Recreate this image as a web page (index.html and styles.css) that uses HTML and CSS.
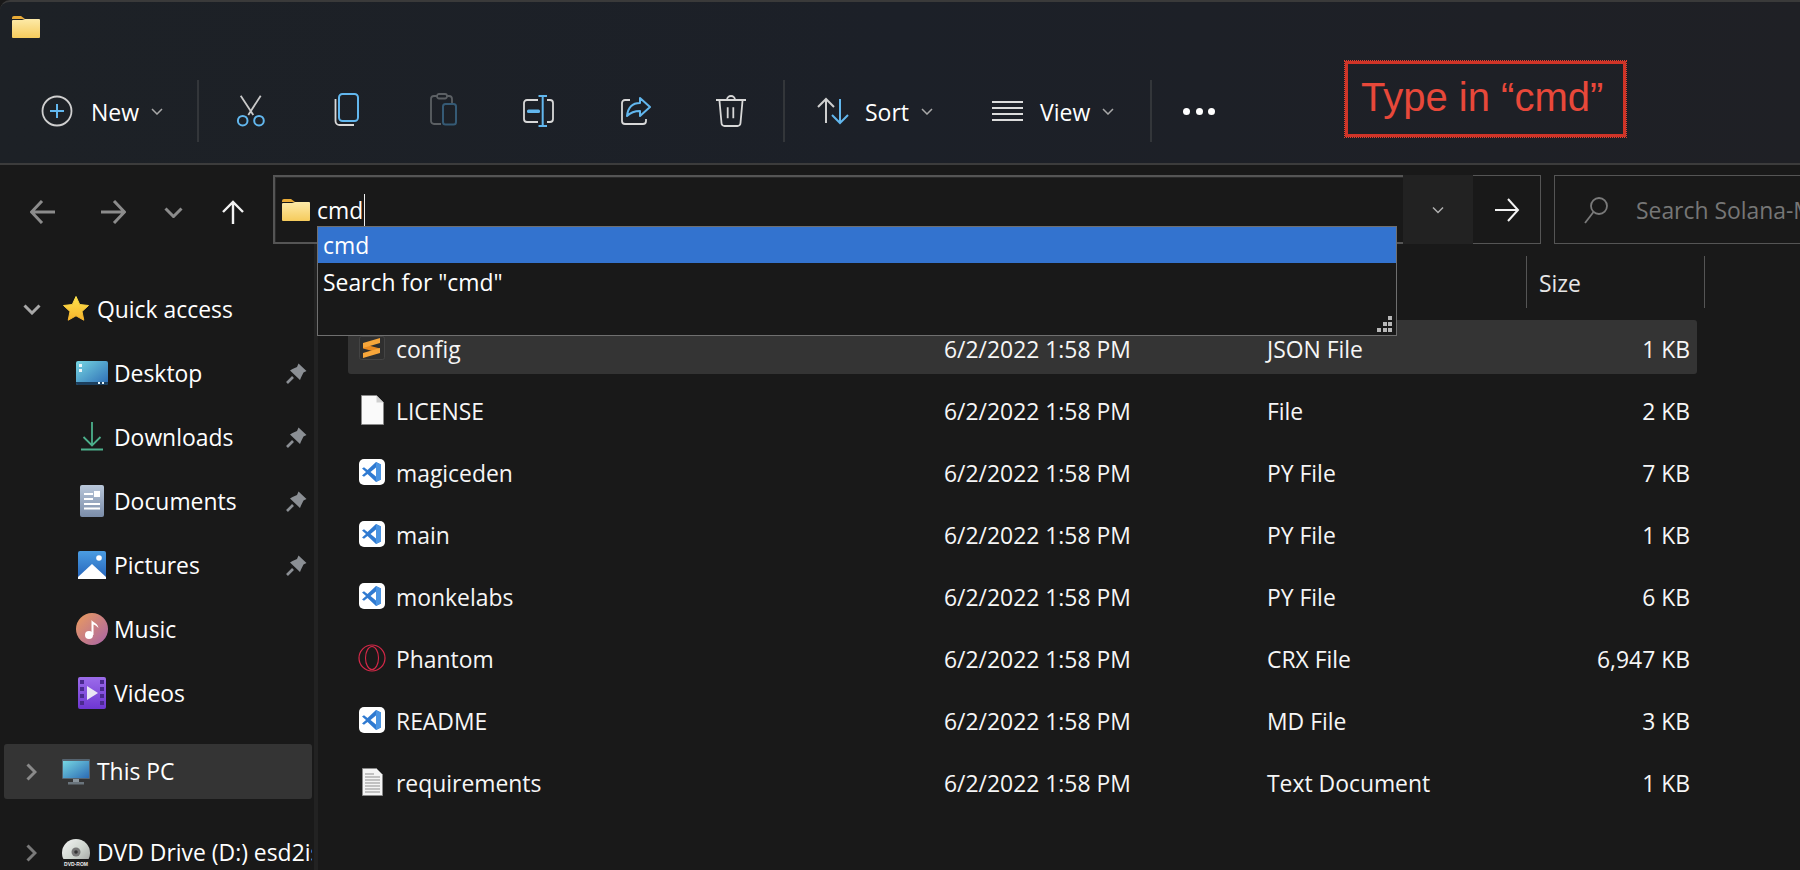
FILE: index.html
```html
<!DOCTYPE html>
<html lang="en">
<head>
    <meta charset="UTF-8">
    <title>Explorer</title>
    <link rel="stylesheet" href="styles.css">
</head>
<body>
    <svg class="defs">
        <defs>
            <linearGradient id="folderBody" x1="0" y1="0" x2="0" y2="1">
                <stop offset="0" stop-color="#fdeaa8"/>
                <stop offset="1" stop-color="#f5cb5c"/>
            </linearGradient>
            <linearGradient id="star" x1="0" y1="0" x2="0" y2="1">
                <stop offset="0" stop-color="#fde24c"/>
                <stop offset="1" stop-color="#f6b42c"/>
            </linearGradient>
            <linearGradient id="desk" x1="0" y1="0" x2="1" y2="1">
                <stop offset="0" stop-color="#76d6e2"/>
                <stop offset="1" stop-color="#2c6bb4"/>
            </linearGradient>
            <linearGradient id="docs" x1="0" y1="0" x2="0" y2="1">
                <stop offset="0" stop-color="#b9c7da"/>
                <stop offset="1" stop-color="#7a8ca8"/>
            </linearGradient>
            <linearGradient id="pics" x1="0" y1="0" x2="0" y2="1">
                <stop offset="0" stop-color="#4b9de2"/>
                <stop offset="1" stop-color="#2463ba"/>
            </linearGradient>
            <linearGradient id="music" x1="0" y1="0" x2="1" y2="1">
                <stop offset="0" stop-color="#ec9d5c"/>
                <stop offset="1" stop-color="#a863a8"/>
            </linearGradient>
            <linearGradient id="video" x1="0" y1="0" x2="0" y2="1">
                <stop offset="0" stop-color="#9c6cea"/>
                <stop offset="1" stop-color="#6e36d2"/>
            </linearGradient>
            <linearGradient id="disc" x1="0" y1="0" x2="1" y2="1">
                <stop offset="0" stop-color="#f4f4f4"/>
                <stop offset="0.5" stop-color="#cfd6cf"/>
                <stop offset="1" stop-color="#9a9a9a"/>
            </linearGradient>

            <symbol id="folder" viewBox="0 0 28 22">
                <path d="M0 2a2 2 0 0 1 2-2h7l4 3H0z" fill="#e9ab37"/>
                <path d="M0 5a1 1 0 0 1 1-1l9 0 3-1h14a1 1 0 0 1 1 1v17a1 1 0 0 1-1 1H1a1 1 0 0 1-1-1z" fill="url(#folderBody)"/>
            </symbol>
            <symbol id="chev" viewBox="0 0 12 7">
                <path d="M1 1l5 5 5-5" fill="none" stroke="currentColor" stroke-width="1.5"/>
            </symbol>
            <symbol id="pin" viewBox="0 0 21 21">
                <path d="M12.5.5l8 7.5-3 1.5-2.5 5-1 2.5L4 7.5 6.5 6 11 4z" fill="#8b8f94"/>
                <path d="M7 14l-6 6" stroke="#8b8f94" stroke-width="2.6"/>
            </symbol>
            <symbol id="vscode" viewBox="0 0 26 26">
                <rect width="26" height="26" rx="5" fill="#fff"/>
                <path d="M17 3l5 2.4v15.2L17 23 8.5 15 5 17.7 3 16.5 7 13 3 9.5l2-1.2L8.500 11z" fill="#2f7ad1"/>
                <path d="M17 3l5 2.4v15.2L17 23z" fill="#4a94e2"/>
                <path d="M17 8.500L11.500 13 17 17.500z" fill="#fff"/>
            </symbol>
        </defs>
    </svg>

    <div class="window">
        <header class="ribbon">
            <div class="titlebar">
                <svg class="folder-icon"><use href="#folder"/></svg>
            </div>
            <div class="toolbar">
                <div class="tool tool-new">
                    <svg width="32" height="32" viewBox="0 0 32 32">
                        <circle cx="16" cy="16" r="14.500" fill="none" stroke="#cfcfcf" stroke-width="1.800"/>
                        <path d="M16 9v14M9 16h14" stroke="#62b7ee" stroke-width="2"/>
                    </svg>
                    <span class="tool-label">New</span>
                    <svg class="tool-chev"><use href="#chev"/></svg>
                </div>
                <div class="sep"></div>
                <div class="tool tool-icon">
                    <svg width="30" height="34" viewBox="0 0 30 34">
                        <path d="M4.700 1.700L17.300 21M24.700 1.700L12.300 21" stroke="#c9c9c9" stroke-width="1.800" fill="none"/>
                        <circle cx="6.700" cy="26.700" r="4.800" fill="none" stroke="#62b7ee" stroke-width="2"/>
                        <circle cx="23" cy="26.700" r="4.800" fill="none" stroke="#62b7ee" stroke-width="2"/>
                    </svg>
                </div>
                <div class="tool tool-icon">
                    <svg width="26" height="36" viewBox="0 0 26 36">
                        <path d="M1.500 6v22a4 4 0 0 0 4 4H20" fill="none" stroke="#d8d8d8" stroke-width="1.800"/>
                        <rect x="5" y="1" width="19" height="27" rx="3.500" fill="none" stroke="#62b7ee" stroke-width="2"/>
                    </svg>
                </div>
                <div class="tool tool-icon">
                    <svg width="29" height="36" viewBox="0 0 29 36">
                        <path d="M12 31H5a3 3 0 0 1-3-3V6a3 3 0 0 1 3-3h3M18 3h2a3 3 0 0 1 3 3v4" fill="none" stroke="#5c6064" stroke-width="1.800"/>
                        <rect x="8" y="1" width="10" height="4.500" rx="2" fill="none" stroke="#5c6064" stroke-width="1.800"/>
                        <rect x="14" y="11" width="13" height="20.500" rx="2.500" fill="none" stroke="#355a75" stroke-width="2"/>
                    </svg>
                </div>
                <div class="tool tool-icon">
                    <svg width="34" height="32" viewBox="0 0 34 32">
                        <path d="M16 5H5a3 3 0 0 0-3 3v16a3 3 0 0 0 3 3h11M25 5h3a3 3 0 0 1 3 3v16a3 3 0 0 1-3 3h-3" fill="none" stroke="#d8d8d8" stroke-width="1.800"/>
                        <path d="M20.700 1v30M16.500 1h8.500M16.500 31h8.500" fill="none" stroke="#62b7ee" stroke-width="2"/>
                        <rect x="5" y="14.500" width="13" height="3.500" rx="1.500" fill="#62b7ee"/>
                    </svg>
                </div>
                <div class="tool tool-icon">
                    <svg width="32" height="32" viewBox="-1 0 32 32">
                        <path d="M10 5H5a3 3 0 0 0-3 3v18a3 3 0 0 0 3 3h18a3 3 0 0 0 3-3v-2" fill="none" stroke="#d8d8d8" stroke-width="1.800"/>
                        <path d="M20 3l10 9-10 9v-5c-6 0-10 2-13 5 1-9 6-13 13-13z" fill="none" stroke="#62b7ee" stroke-width="2" stroke-linejoin="round"/>
                    </svg>
                </div>
                <div class="tool tool-icon">
                    <svg width="30" height="32" viewBox="0 0 30 32">
                        <path d="M0 5h30M11 5a4 4 0 0 1 8 0M3.500 6l2 22a3 3 0 0 0 3 3h13a3 3 0 0 0 3-3l2-22M11.700 12.300v11M17.300 12.300v11" fill="none" stroke="#d8d8d8" stroke-width="1.800"/>
                    </svg>
                </div>
                <div class="sep"></div>
                <div class="tool tool-sort">
                    <svg width="32" height="28" viewBox="0 0 32 28">
                        <path d="M9 2v24M1 10l8-8 8 8" fill="none" stroke="#cfcfcf" stroke-width="2"/>
                        <path d="M23 2v24M15 18l8 8 8-8" fill="none" stroke="#62b7ee" stroke-width="2"/>
                    </svg>
                    <span class="tool-label">Sort</span>
                    <svg class="tool-chev"><use href="#chev"/></svg>
                </div>
                <div class="tool tool-view">
                    <svg width="31" height="20" viewBox="0 0 31 20">
                        <path d="M0 1h31M0 7h31M0 13h31M0 19h31" stroke="#dcdcdc" stroke-width="2"/>
                    </svg>
                    <span class="tool-label">View</span>
                    <svg class="tool-chev"><use href="#chev"/></svg>
                </div>
                <div class="sep"></div>
                <div class="tool tool-more">
                    <span class="dot"></span><span class="dot"></span><span class="dot"></span>
                </div>
            </div>
        </header>

        <div class="address-row">
            <div class="nav-btn nav-wide">
                <svg width="26" height="24" viewBox="0 0 26 24"><path d="M25 12H2M12 1L1.500 12 12 23" fill="none" stroke="#8c8c8c" stroke-width="3"/></svg>
            </div>
            <div class="nav-btn nav-wide">
                <svg width="26" height="24" viewBox="0 0 26 24"><path d="M1 12h23M14 1l10.500 11L14 23" fill="none" stroke="#8c8c8c" stroke-width="3"/></svg>
            </div>
            <div class="nav-btn nav-narrow">
                <svg width="19" height="11" viewBox="0 0 19 11"><path d="M1.500 1.500l8 8 8-8" fill="none" stroke="#8c8c8c" stroke-width="3"/></svg>
            </div>
            <div class="nav-btn nav-wide">
                <svg width="22" height="24" viewBox="0 0 22 24"><path d="M11 24V2M1 12L11 2l10 10" fill="none" stroke="#f2f2f2" stroke-width="2.400"/></svg>
            </div>
            <div class="address-box">
                <svg class="folder-icon"><use href="#folder"/></svg>
                <span class="address-text">cmd</span><span class="caret"></span>
            </div>
            <div class="address-drop">
                <svg class="drop-chev"><use href="#chev"/></svg>
            </div>
            <div class="go-btn">
                <svg width="26" height="24" viewBox="0 0 26 24"><path d="M1 12h23M14 1l10 11-10 11" fill="none" stroke="#f2f2f2" stroke-width="2"/></svg>
            </div>
            <div class="search-box">
                <svg width="26" height="28" viewBox="0 0 26 28"><circle cx="16" cy="10" r="8" fill="none" stroke="#7a7a7a" stroke-width="1.800"/><path d="M10.500 16L2 27" stroke="#7a7a7a" stroke-width="1.800"/></svg>
                <span class="search-text">Search Solana-Main</span>
            </div>
        </div>

        <div class="content">
            <nav class="sidebar">
                <div class="nav-row nav-top">
                    <span class="expander"><svg width="18" height="11" viewBox="0 0 18 11"><path d="M1.500 1.500L9 9l7.500-7.500" fill="none" stroke="#a8a8a8" stroke-width="3"/></svg></span>
                    <svg class="nav-icon" width="28" height="28" viewBox="0 0 28 28"><path d="M14 1.500l3.700 8 8.800 1-6.500 6 1.800 8.700L14 20.800 6.200 25.200 8 16.500l-6.500-6 8.800-1z" fill="url(#star)" stroke="url(#star)" stroke-linejoin="round"/></svg>
                    <span class="nav-label">Quick access</span>
                </div>
                <div class="nav-row nav-sub">
                    <svg class="nav-icon" width="32" height="24" viewBox="0 0 32 24"><rect width="32" height="24" rx="2" fill="url(#desk)"/><path d="M0 21h32v1a2 2 0 0 1-2 2H2a2 2 0 0 1-2-2z" fill="#1c3f5e"/><path d="M3 3h3v3H3zM3 8h3v3H3zM22 21h2v2h-2zM26 21h2v2h-2z" fill="#e8f6fa"/></svg>
                    <span class="nav-label">Desktop</span>
                    <svg class="pin"><use href="#pin"/></svg>
                </div>
                <div class="nav-row nav-sub">
                    <svg class="nav-icon" width="32" height="30" viewBox="0 0 32 30"><path d="M16 0v23M7.500 15l8.500 8.500 8.500-8.500M5 27.500h22" fill="none" stroke="#4cb08c" stroke-width="1.800"/></svg>
                    <span class="nav-label">Downloads</span>
                    <svg class="pin"><use href="#pin"/></svg>
                </div>
                <div class="nav-row nav-sub">
                    <svg class="nav-icon" width="32" height="32" viewBox="0 0 32 32"><rect x="4" width="24" height="32" rx="2" fill="url(#docs)"/><path d="M8 8h9v2H8zM8 13h9v2H8zM8 18h16v2H8zM8 22.500h16v2H8z" fill="#fff"/><rect x="18" y="6" width="6" height="6" fill="#fff"/></svg>
                    <span class="nav-label">Documents</span>
                    <svg class="pin"><use href="#pin"/></svg>
                </div>
                <div class="nav-row nav-sub">
                    <svg class="nav-icon" width="32" height="28" viewBox="0 0 32 28"><rect x="2" width="28" height="28" rx="2" fill="url(#pics)"/><path d="M2 26L16 13l14 13v2H2z" fill="#fff"/><circle cx="23" cy="7" r="2.800" fill="#fff"/></svg>
                    <span class="nav-label">Pictures</span>
                    <svg class="pin"><use href="#pin"/></svg>
                </div>
                <div class="nav-row nav-sub">
                    <svg class="nav-icon" width="32" height="32" viewBox="0 0 32 32"><circle cx="16" cy="16" r="16" fill="url(#music)"/><circle cx="13" cy="22" r="4" fill="#fff"/><path d="M15.500 22V7c2 3 6 3 7 8-2-2-3-3-5-3.500V22z" fill="#fff"/></svg>
                    <span class="nav-label">Music</span>
                </div>
                <div class="nav-row nav-sub">
                    <svg class="nav-icon" width="32" height="32" viewBox="0 0 32 32"><rect x="2" width="28" height="32" rx="2" fill="url(#video)"/><path d="M4 3h4v4H4zM4 10h4v4H4zM4 17h4v4H4zM4 24h4v4H4zM24 3h4v4h-4zM24 10h4v4h-4zM24 17h4v4h-4zM24 24h4v4h-4z" fill="#4b2a90"/><path d="M11 9l11 7-11 7z" fill="#eae6f4"/></svg>
                    <span class="nav-label">Videos</span>
                </div>
                <div class="nav-row nav-top nav-selected">
                    <span class="expander"><svg width="11" height="18" viewBox="0 0 11 18"><path d="M1.500 1.500L9 9l-7.500 7.500" fill="none" stroke="#8a8a8a" stroke-width="3"/></svg></span>
                    <svg class="nav-icon" width="28" height="26" viewBox="0 0 28 26"><rect width="28" height="20" rx="1" fill="#566470"/><rect x="1" y="2" width="26" height="17" fill="url(#desk)"/><rect x="11" y="20" width="6" height="3" fill="#8a949c"/><rect x="6" y="23" width="16" height="2.500" fill="#6a747c"/></svg>
                    <span class="nav-label">This PC</span>
                </div>
                <div class="nav-row nav-top nav-drive">
                    <span class="expander"><svg width="11" height="18" viewBox="0 0 11 18"><path d="M1.500 1.500L9 9l-7.500 7.500" fill="none" stroke="#7a7a7a" stroke-width="3"/></svg></span>
                    <svg class="nav-icon" width="28" height="28" viewBox="0 0 28 28"><circle cx="14" cy="14" r="14" fill="url(#disc)"/><circle cx="14" cy="13" r="4.500" fill="#777"/><circle cx="14" cy="13" r="1.800" fill="#333"/><rect y="20" width="28" height="8" fill="#1c1c1c"/><text class="dvd-label" x="14" y="26.500" text-anchor="middle">DVD-ROM</text></svg>
                    <span class="nav-label">DVD Drive (D:) esd2iso</span>
                </div>
            </nav>

            <main class="files">
                <div class="file-header">
                    <span class="col-head col-size">Size</span>
                </div>

                <div class="file-row file-selected">
                    <span class="file-icon">
                        <svg width="26" height="24" viewBox="0 0 26 24"><rect x=".5" y=".5" width="25" height="23" rx="2" fill="#2f2f2f" stroke="#444"/><path d="M4 8l17 4.500V17L4 12.500z" fill="#e98a20"/><path d="M4 7l17-5v5L4 12zM4 17l17-5v5L4 22z" fill="#f7a63a"/></svg>
                    </span>
                    <span>config</span><span>6/2/2022 1:58 PM</span><span>JSON File</span><span class="file-size">1 KB</span>
                </div>
                <div class="file-row">
                    <span class="file-icon">
                        <svg width="23" height="30" viewBox="0 0 23 30"><path d="M.5.500h15l7 7v22H.5z" fill="#fafafa" stroke="#8a8a8a"/><path d="M15.500.500v7h7z" fill="#cfcfcf"/></svg>
                    </span>
                    <span>LICENSE</span><span>6/2/2022 1:58 PM</span><span>File</span><span class="file-size">2 KB</span>
                </div>
                <div class="file-row">
                    <span class="file-icon"><svg width="26" height="26"><use href="#vscode"/></svg></span>
                    <span>magiceden</span><span>6/2/2022 1:58 PM</span><span>PY File</span><span class="file-size">7 KB</span>
                </div>
                <div class="file-row">
                    <span class="file-icon"><svg width="26" height="26"><use href="#vscode"/></svg></span>
                    <span>main</span><span>6/2/2022 1:58 PM</span><span>PY File</span><span class="file-size">1 KB</span>
                </div>
                <div class="file-row">
                    <span class="file-icon"><svg width="26" height="26"><use href="#vscode"/></svg></span>
                    <span>monkelabs</span><span>6/2/2022 1:58 PM</span><span>PY File</span><span class="file-size">6 KB</span>
                </div>
                <div class="file-row">
                    <span class="file-icon">
                        <svg width="28" height="28" viewBox="0 0 28 28"><circle cx="14" cy="14" r="13" fill="none" stroke="#d62848" stroke-width="1.200"/><ellipse cx="14" cy="14" rx="6.500" ry="11.500" fill="none" stroke="#d62848" stroke-width="1.100"/></svg>
                    </span>
                    <span>Phantom</span><span>6/2/2022 1:58 PM</span><span>CRX File</span><span class="file-size">6,947 KB</span>
                </div>
                <div class="file-row">
                    <span class="file-icon"><svg width="26" height="26"><use href="#vscode"/></svg></span>
                    <span>README</span><span>6/2/2022 1:58 PM</span><span>MD File</span><span class="file-size">3 KB</span>
                </div>
                <div class="file-row">
                    <span class="file-icon">
                        <svg width="21" height="28" viewBox="0 0 21 28"><path d="M.5.500h14l6 6v21H.5z" fill="#f4f4f4" stroke="#8a8a8a"/><path d="M3 6h9M3 9h15M3 12h15M3 15h15M3 18h15M3 21h15M3 24h15" stroke="#8f8f8f"/></svg>
                    </span>
                    <span>requirements</span><span>6/2/2022 1:58 PM</span><span>Text Document</span><span class="file-size">1 KB</span>
                </div>
            </main>
        </div>
    </div>

    <!-- autocomplete list over the address bar -->
    <div class="suggest">
        <div class="suggest-item suggest-active">cmd</div>
        <div class="suggest-item">Search for "cmd"</div>
        <svg class="grip" width="16" height="16" viewBox="0 0 16 16"><path d="M11 0h4v4h-4zM6 6h4v4H6zM11 6h4v4h-4zM0 12h4v4H0zM6 12h4v4H6zM11 12h4v4h-4z" fill="#b8b8b8"/></svg>
    </div>

    <!-- red note drawn on top of the screenshot -->
    <div class="note">Type in “cmd”</div>
</body>
</html>
```

FILE: styles.css
```css
* {
    box-sizing: border-box;
}
html, body {
    margin: 0;
    height: 100%;
    overflow: hidden;
}
body {
    position: relative;
    font-family: "Open Sans", "Noto Sans", sans-serif;
    font-size: 22.900px;
    color: #fff;
    background-color: #191919;
}
svg {
    display: block;
    flex: none;
}
.defs {
    position: absolute;
    width: 0;
    height: 0;
}
.window {
    width: 1800px;
    height: 870px;
}

/* ribbon */
.ribbon {
    height: 165px;
    border-top: 2px solid #3a3a3a;
    border-bottom: 2px solid #3c3c3c;
    border-top-left-radius: 10px;
    background: linear-gradient(90deg, #1d2126 0%, #1c2028 50%, #1f2025 100%);
}
.titlebar {
    height: 78px;
    padding: 14px 12px 0;
}
.folder-icon {
    width: 28px;
    height: 22px;
}
.toolbar {
    display: flex;
    align-items: center;
    height: 62px;
    padding-left: 20px;
}
.sep {
    flex: none;
    width: 2px;
    height: 62px;
    margin: 0 4px;
    background-color: #33363a;
}
.tool {
    display: flex;
    align-items: center;
    flex: none;
}
.tool-label {
    padding-top: 3px;
    font-size: 23px;
    line-height: 1;
}
.tool-chev {
    width: 12px;
    height: 7px;
    color: #a8a8a8;
}
.tool-new {
    width: 173px;
    padding-left: 21px;
}
.tool-new .tool-label {
    margin-left: 18px;
}
.tool-new .tool-chev {
    margin-left: 12px;
}
.tool-icon {
    justify-content: center;
    width: 96px;
}
.tool-sort {
    width: 174px;
    padding-left: 28px;
}
.tool-sort .tool-label {
    margin-left: 16px;
}
.tool-sort .tool-chev {
    margin-left: 12px;
}
.tool-view {
    width: 183px;
    padding-left: 29px;
}
.tool-view .tool-label {
    margin-left: 17px;
}
.tool-view .tool-chev {
    margin-left: 12px;
}
.tool-more {
    gap: 5.500px;
    margin-left: 27px;
}
.dot {
    width: 7px;
    height: 7px;
    border-radius: 50%;
    background-color: #fff;
}

/* address row */
.address-row {
    display: flex;
    height: 69px;
    margin-top: 10px;
    padding-left: 8px;
}
.nav-btn {
    display: flex;
    align-items: center;
    justify-content: center;
    flex: none;
    padding-top: 5px;
}
.nav-wide {
    width: 70px;
}
.nav-narrow {
    width: 50px;
}
.address-box {
    display: flex;
    align-items: center;
    flex: none;
    width: 1130px;
    margin-left: 5px;
    padding-left: 7px;
    border: 2px solid #555;
    border-right: none;
    box-shadow: inset 1px 1px 0 #2a2a2a;
}
.address-text {
    margin-left: 7px;
    padding-top: 2px;
}
.caret {
    width: 1px;
    height: 32px;
    margin-left: 1px;
    background-color: #eee;
}
.address-drop {
    display: flex;
    align-items: center;
    justify-content: center;
    flex: none;
    width: 70px;
    background-color: #222;
}
.drop-chev {
    width: 12px;
    height: 8px;
    color: #b0b0b0;
}
.go-btn {
    display: flex;
    align-items: center;
    justify-content: center;
    flex: none;
    width: 68px;
    border: 1px solid #555;
    border-left: none;
}
.search-box {
    display: flex;
    align-items: center;
    flex: none;
    width: 320px;
    margin-left: 13px;
    padding-left: 28px;
    border: 1px solid #555;
    white-space: nowrap;
}
.search-text {
    margin-left: 27px;
    padding-top: 2px;
    color: #767676;
}

/* body */
.content {
    display: flex;
    height: 626px;
}
.sidebar {
    flex: none;
    width: 318px;
    padding: 33px 0 0 4px;
    border-right: 4px solid #222;
    overflow: hidden;
}
.nav-row {
    display: flex;
    align-items: center;
    white-space: nowrap;
    overflow: hidden;
}
.nav-top {
    height: 55px;
    margin-right: 2px;
}
.nav-top:first-child {
    height: 64px;
}
.nav-sub {
    height: 64px;
    padding-left: 72px;
}
.nav-top .nav-icon {
    margin-right: 7px;
}
.nav-sub .nav-icon {
    margin-right: 6px;
}
.expander {
    display: flex;
    align-items: center;
    justify-content: center;
    flex: none;
    width: 58px;
    padding-right: 3px;
}
.nav-selected {
    margin-top: 19px;
    border-radius: 3px;
    background-color: #343434;
}
.nav-drive {
    margin-top: 26px;
}
.dvd-label {
    font-family: "Liberation Sans", sans-serif;
    font-size: 5px;
    font-weight: bold;
    fill: #eee;
}
.pin {
    width: 21px;
    height: 21px;
    margin-left: auto;
    margin-right: 7px;
}
.files {
    flex: 1;
    min-width: 0;
    padding: 12px 0 0 30px;
}
.file-header {
    display: flex;
    justify-content: flex-start;
    height: 52px;
    margin-bottom: 12px;
    padding-left: 1178px;
}
.col-head {
    display: flex;
    align-items: center;
    color: #e6e6e6;
}
.col-size {
    width: 179px;
    padding: 2px 0 0 12px;
    border-left: 1px solid #555;
    border-right: 1px solid #555;
}
.file-row {
    display: grid;
    grid-template-columns: 48px 548px 323px 259px 171px;
    align-items: center;
    width: 1349px;
    height: 54px;
    margin-bottom: 8px;
    border-radius: 3px;
    color: #f6f6f6;
}
.file-row > span {
    padding-top: 4px;
}
.file-row > .file-icon {
    padding-top: 1px;
}
.file-selected {
    background-color: #343434;
}
.file-icon {
    display: flex;
    justify-content: center;
}
.file-size {
    text-align: right;
    padding-right: 7px;
}

/* suggestion list */
.suggest {
    position: absolute;
    left: 317px;
    top: 226px;
    width: 1080px;
    height: 110px;
    border: 1px solid #6f6f6f;
    background-color: #191919;
}
.suggest-item {
    height: 36px;
    padding-left: 5px;
    line-height: 38px;
}
.suggest-item + .suggest-item {
    margin-top: 1px;
}
.suggest-active {
    background-color: #3373cf;
}
.grip {
    position: absolute;
    right: 3px;
    bottom: 3px;
}

/* annotation */
.note {
    position: absolute;
    left: 1345px;
    top: 61px;
    width: 281px;
    height: 76px;
    border: 3px solid #cf3428;
    outline: 1px dotted #e2402f;
    font-family: "Liberation Sans", Arial, sans-serif;
    font-size: 40px;
    line-height: 66px;
    padding-left: 13px;
    color: #e8483a;
}
```
